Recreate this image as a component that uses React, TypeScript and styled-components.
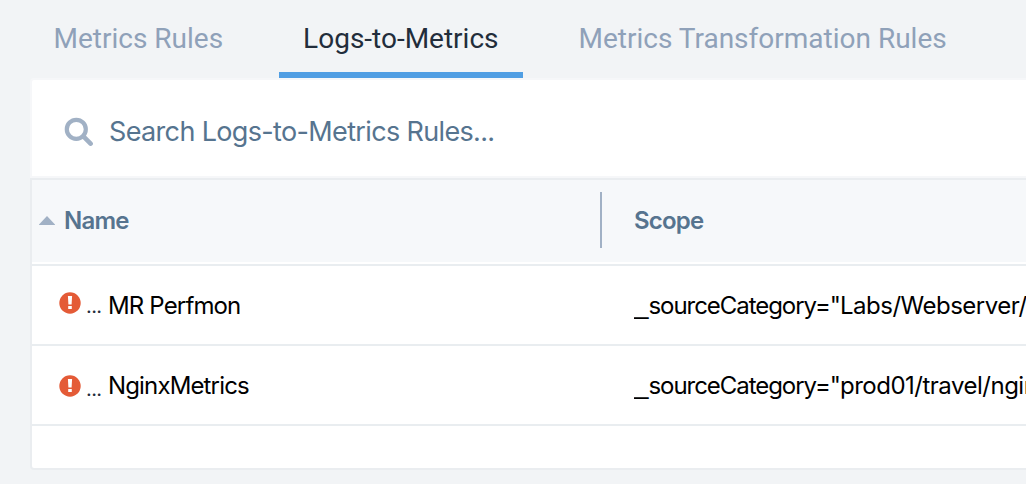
import React from 'react';
import styled, { createGlobalStyle } from 'styled-components';

const GlobalStyle = createGlobalStyle`
  *, *::before, *::after { box-sizing: border-box; }
  html, body { margin: 0; background: #f2f4f6; }
  body { overflow: hidden; }
`;

const Page = styled.main`
  height: 484px;
  background: #f2f4f6;
  font-family: Inter, sans-serif;
  overflow: hidden;
`;

const TabBar = styled.nav`
  display: flex;
  gap: 32px;
  height: 78px;
  padding-left: 29.5px;
  font-family: Roboto, sans-serif;
`;

const Tab = styled.button<{ $active?: boolean }>`
  flex: none;
  height: 78px;
  padding: 6px 24px 0;
  border: 0;
  border-bottom: 6px solid ${({ $active }) => ($active ? '#509ee3' : 'transparent')};
  background: none;
  color: ${({ $active }) => ($active ? '#222d3b' : '#8fa1b9')};
  font: inherit;
  font-size: 28px;
  line-height: 66px;
  white-space: nowrap;
`;

const Panel = styled.section`
  width: 1000px;
  margin-left: 30px;
`;

const SearchBar = styled.label`
  display: flex;
  align-items: center;
  gap: 16px;
  height: 100px;
  padding: 6px 0 0 32px;
  border: 2px solid #f6f7f9;
  border-radius: 4px 0 0 0;
  background: #fff;
`;

const SearchText = styled.span`
  color: #56748f;
  font-size: 27px;
  letter-spacing: -0.65px;
  white-space: nowrap;
`;

const Table = styled.div`
  height: 292px;
  border: 2px solid #eaedf0;
  border-radius: 0 0 0 4px;
  background: #fff;
  overflow: hidden;
`;

const HeaderRow = styled.div`
  display: flex;
  align-items: center;
  height: 82px;
  margin-bottom: 2px;
  background: #f6f8fa;
  color: #56748f;
  font-size: 24px;
  font-weight: 600;
  letter-spacing: -0.8px;
`;

const NameHeader = styled.div`
  display: flex;
  flex: 0 0 570px;
  align-items: center;
  gap: 9px;
  height: 56px;
  margin-top: -2px;
  padding: 1px 0 0 7px;
  border-right: 2px solid #a1b1c5;
`;

const ScopeHeader = styled.div`
  padding: 0 0 1px 32px;
`;

const Row = styled.div`
  display: flex;
  align-items: center;
  height: 80px;
  padding-top: 1px;
  border-top: 2px solid #e9edf0;
  color: #000;
  font-size: 24px;
  letter-spacing: -0.85px;
  white-space: nowrap;

  &:last-child { height: 44px; }
`;

const NameCell = styled.div`
  display: flex;
  flex: 0 0 602px;
  align-items: center;
  padding-left: 27px;
`;

const Status = styled.span<{ $shift: number }>`
  display: flex;
  align-items: center;
  gap: 5px;
  width: 49px;
  margin-top: ${({ $shift }) => $shift}px;
`;

const Dots = styled.span`
  padding-top: 6px;
  color: #222d3b;
  font-size: 20px;
  letter-spacing: -0.6px;
`;

const ScopeCell = styled.div`
  flex: 1;
  min-width: 0;
  overflow: hidden;
`;

const Underscore = styled.span`
  font-family: "Liberation Sans", sans-serif;
  font-size: 26px;
  line-height: 1;
  letter-spacing: 0;
`;

const ScopeKey = styled.span`
  letter-spacing: -1.05px;
`;

const ScopeValue = styled.span`
  letter-spacing: -0.5px;
`;

const SearchIcon = () => (
  <svg width="29" height="29" viewBox="0 0 29 29" fill="none" stroke="#a1b1c5" aria-hidden="true">
    <circle cx="12.3" cy="12.3" r="9.5" strokeWidth="4.2" />
    <path d="M19.4 19.4 26.6 26.6" strokeWidth="4.6" strokeLinecap="round" />
  </svg>
);

const SortIcon = () => (
  <svg width="16" height="10" viewBox="0 0 16 10" fill="#a1b1c5" aria-hidden="true">
    <path d="M8 0 16 8.5V9H0V8.5Z" />
  </svg>
);

const ErrorIcon = () => (
  <svg width="22" height="22" viewBox="0 0 22 22" aria-hidden="true">
    <circle cx="11" cy="11" r="10.7" fill="#e45b37" />
    <path d="M8.9 4H13.1L12.6 12.4H9.4ZM9.2 13.9H12.8V17H9.2Z" fill="#fff" />
  </svg>
);

const rules = [
  { name: 'MR Perfmon', scope: 'Labs/Webserver/', shift: -5 },
  { name: 'NginxMetrics', scope: 'prod01/travel/ngin', shift: 1 },
];

export default function App() {
  return (
    <>
      <GlobalStyle />
      <Page>
        <TabBar>
          <Tab>Metrics Rules</Tab>
          <Tab $active>Logs-to-Metrics</Tab>
          <Tab>Metrics Transformation Rules</Tab>
        </TabBar>
        <Panel>
          <SearchBar>
            <SearchIcon />
            <SearchText>Search Logs-to-Metrics Rules...</SearchText>
          </SearchBar>
          <Table>
            <HeaderRow>
              <NameHeader>
                <SortIcon />
                Name
              </NameHeader>
              <ScopeHeader>Scope</ScopeHeader>
            </HeaderRow>
            {rules.map((rule) => (
              <Row key={rule.name}>
                <NameCell>
                  <Status $shift={rule.shift}>
                    <ErrorIcon />
                    <Dots>...</Dots>
                  </Status>
                  {rule.name}
                </NameCell>
                <ScopeCell>
                  <Underscore>_</Underscore>
                  <ScopeKey>sourceCategory="</ScopeKey>
                  <ScopeValue>{rule.scope}</ScopeValue>
                </ScopeCell>
              </Row>
            ))}
            <Row />
          </Table>
        </Panel>
      </Page>
    </>
  );
}
